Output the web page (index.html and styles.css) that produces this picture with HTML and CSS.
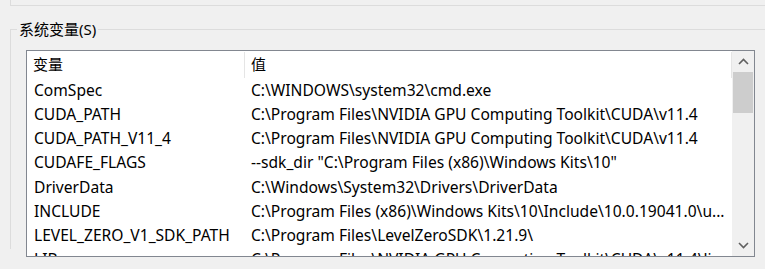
FILE: index.html
```html
<!DOCTYPE html>
<html lang="zh-CN">
<head>
    <meta charset="UTF-8">
    <meta name="viewport" content="width=device-width, initial-scale=1.0">
    <title>环境变量</title>
    <link rel="stylesheet" href="styles.css">
</head>
<body>
    <div class="upper-box"></div>

    <fieldset class="group">
        <legend>系统变量(S)</legend>
        <div class="list">
            <div class="table">
                <div class="head">
                    <div class="cell">变量</div>
                    <div class="cell">值</div>
                </div>
                <div class="row">
                    <div class="cell">ComSpec</div>
                    <div class="cell">C:\WINDOWS\system32\cmd.exe</div>
                </div>
                <div class="row">
                    <div class="cell">CUDA_PATH</div>
                    <div class="cell">C:\Program Files\NVIDIA GPU Computing Toolkit\CUDA\v11.4</div>
                </div>
                <div class="row">
                    <div class="cell">CUDA_PATH_V11_4</div>
                    <div class="cell">C:\Program Files\NVIDIA GPU Computing Toolkit\CUDA\v11.4</div>
                </div>
                <div class="row">
                    <div class="cell">CUDAFE_FLAGS</div>
                    <div class="cell">--sdk_dir "C:\Program Files (x86)\Windows Kits\10"</div>
                </div>
                <div class="row">
                    <div class="cell">DriverData</div>
                    <div class="cell">C:\Windows\System32\Drivers\DriverData</div>
                </div>
                <div class="row">
                    <div class="cell">INCLUDE</div>
                    <div class="cell">C:\Program Files (x86)\Windows Kits\10\Include\10.0.19041.0\u...</div>
                </div>
                <div class="row">
                    <div class="cell">LEVEL_ZERO_V1_SDK_PATH</div>
                    <div class="cell">C:\Program Files\LevelZeroSDK\1.21.9\</div>
                </div>
                <div class="row">
                    <div class="cell">LIB</div>
                    <div class="cell">C:\Program Files\NVIDIA GPU Computing Toolkit\CUDA\v11.4\li...</div>
                </div>
            </div>

            <div class="scrollbar">
                <div class="arrow">
                    <svg width="11" height="7" viewBox="0 0 11 7"><polyline points="1,6 5.5,1.5 10,6" /></svg>
                </div>
                <div class="thumb"></div>
                <div class="track"></div>
                <div class="arrow">
                    <svg width="11" height="7" viewBox="0 0 11 7"><polyline points="1,1 5.5,5.5 10,1" /></svg>
                </div>
            </div>
        </div>
    </fieldset>
</body>
</html>
```

FILE: styles.css
```css
body {
    margin: 0;
    height: 269px;
    overflow: hidden;
    background-color: #f0f0f0;
    font-family: "Noto Sans", "Noto Sans CJK SC", sans-serif;
    font-size: 15px;
    color: #000;
}
.upper-box {
    margin-left: 10px;
    height: 5px;
    border-left: 1px solid #dcdcdc;
    border-bottom: 1px solid #dcdcdc;
}
.group {
    margin: 13px 0 0 10px;
    padding: 0 0 0 15px;
    height: 230px;
    box-sizing: border-box;
    border: none;
    border-top: 1px solid #dcdcdc;
    border-left: 1px solid #dcdcdc;
    min-width: 0;
}
.group legend {
    margin-left: -9px;
    padding: 0 2px;
    line-height: 20px;
}
.list {
    margin-top: 11px;
    width: 729px;
    height: 207px;
    box-sizing: border-box;
    border: 1px solid #828790;
    background-color: #fff;
    display: flex;
}
.table {
    flex: 1;
    overflow: hidden;
    font-size: 15.6px;
}
.head,
.row {
    display: grid;
    grid-template-columns: 218px 1fr;
    white-space: nowrap;
}
.head {
    height: 27px;
    padding-top: 1px;
    box-sizing: border-box;
    font-size: 15px;
}
.head .cell {
    border-right: 1px solid #e5e5e5;
    line-height: 25px;
    padding-left: 6px;
}
.row {
    height: 24.17px;
    line-height: 24px;
}
.cell {
    padding-left: 7px;
    overflow: hidden;
}
.row .cell + .cell,
.head .cell + .cell {
    padding-left: 6px;
}
.scrollbar {
    width: 22px;
    background-color: #f0f0f0;
    display: flex;
    flex-direction: column;
}
.arrow {
    height: 21px;
    display: flex;
    align-items: center;
    justify-content: center;
}
.arrow svg polyline {
    fill: none;
    stroke: #606060;
    stroke-width: 1.6;
}
.thumb {
    margin: 0 1px;
    height: 41px;
    background-color: #cdcdcd;
}
.track {
    flex: 1;
}
```
